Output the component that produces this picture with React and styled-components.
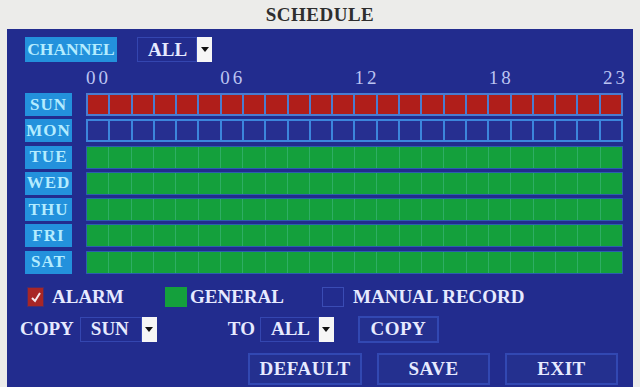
import React from 'react';
import styled, {createGlobalStyle} from 'styled-components';

const GlobalStyle = createGlobalStyle`
html, body {
    margin: 0;
    padding: 0;
    background: #ececea;
}
`;

const Page = styled.div`
width: 640px;
height: 387px;
overflow: hidden;
background: #ececea;
display: flex;
flex-direction: column;
font-family: "Liberation Serif", "Times New Roman", serif;
font-weight: bold;
font-size: 19px;
`;

const TitleBar = styled.div`
height: 29px;
line-height: 30px;
text-align: center;
color: #2e2e2e;
letter-spacing: 0.5px;
flex-shrink: 0;
`;

const Panel = styled.div`
flex: 1;
margin: 0 7px;
background: #222c8e;
padding: 8px 0 0 18px;
display: flex;
flex-direction: column;
color: #e6eaff;
`;

const Row = styled.div`
display: flex;
align-items: center;
height: ${p => p.h}px;
margin-top: ${p => p.mt || 0}px;
margin-left: ${p => p.ml || 0}px;
`;

const Tag = styled.div`
width: ${p => p.w}px;
height: ${p => p.h}px;
background: #2391dc;
color: #b4ecff;
font-size: ${p => p.fs || 19}px;
letter-spacing: ${p => p.ls || 0}px;
display: flex;
align-items: center;
justify-content: center;
flex-shrink: 0;
`;

const SelectBox = styled.div`
display: flex;
align-items: stretch;
height: 25px;
margin-left: ${p => p.ml || 0}px;
`;

const SelectValue = styled.div`
width: ${p => p.w}px;
border: 1px solid #3446b0;
box-sizing: border-box;
display: flex;
align-items: center;
padding-left: 10px;
`;

const Arrow = styled.div`
width: 15px;
background: #f6f6f6;
display: flex;
align-items: center;
justify-content: center;
&::after {
    content: '';
    border-left: 4px solid transparent;
    border-right: 4px solid transparent;
    border-top: 5px solid #111;
}
`;

const Hours = styled.div`
display: grid;
grid-template-columns: repeat(24, 1fr);
width: 537px;
margin-left: 61px;
height: 31px;
align-items: center;
font-weight: normal;
font-size: 19px;
letter-spacing: 3px;
color: #bcc4f2;
`;

const Hour = styled.span`
grid-column: ${p => p.col + 1} / span 3;
text-align: ${p => p.right ? 'right' : 'left'};
margin-right: ${p => p.right ? -5 : 0}px;
`;

const Days = styled.div`
display: flex;
flex-direction: column;
gap: 3.3px;
`;

const DayRow = styled.div`
display: flex;
align-items: stretch;
height: 23px;
`;

const Cells = styled.div`
margin-left: 14px;
width: 537px;
box-sizing: border-box;
display: grid;
grid-template-columns: repeat(24, 1fr);
gap: ${p => p.kind === 'green' ? 1 : 2}px;
padding: ${p => p.kind === 'green' ? 0 : 2}px;
background: ${p => p.kind === 'red' ? '#4a7cd0' : p.kind === 'blue' ? '#3c86dc' : '#2eae64'};
border: ${p => p.kind === 'green' ? '1px solid #2b5fae' : 'none'};
`;

const Cell = styled.div`
background: ${p => p.kind === 'red' ? '#b01e1a' : p.kind === 'blue' ? '#262f90' : '#14a03c'};
`;

const Legend = styled.div`
display: flex;
align-items: center;
height: 20px;
margin-top: 13px;
margin-left: 2px;
`;

const LegendItem = styled.div`
display: flex;
align-items: center;
width: ${p => p.w ? p.w + 'px' : 'auto'};
`;

const Swatch = styled.div`
width: ${p => p.w}px;
height: 20px;
box-sizing: border-box;
margin-right: ${p => p.mr}px;
background: ${p => p.bg};
border: 1px solid ${p => p.bd};
display: flex;
align-items: center;
justify-content: center;
`;

const Label = styled.span`
margin-left: ${p => p.ml || 0}px;
white-space: pre;
`;

const Btn = styled.div`
width: ${p => p.w}px;
height: ${p => p.h}px;
margin-left: ${p => p.ml || 0}px;
box-sizing: border-box;
border: 2px solid #3248b2;
background: #24308f;
letter-spacing: 0.5px;
display: flex;
align-items: center;
justify-content: center;
`;

const days = [
    {name: 'SUN', kind: 'red'},
    {name: 'MON', kind: 'blue'},
    {name: 'TUE', kind: 'green'},
    {name: 'WED', kind: 'green'},
    {name: 'THU', kind: 'green'},
    {name: 'FRI', kind: 'green'},
    {name: 'SAT', kind: 'green'},
];

const hours = [0, 6, 12, 18, 23];

const Select = ({value, w, ml}) => (
    <SelectBox ml={ml}>
        <SelectValue w={w}>{value}</SelectValue>
        <Arrow />
    </SelectBox>
);

const App = () => {
    return (
        <Page>
            <GlobalStyle />
            <TitleBar>SCHEDULE</TitleBar>
            <Panel>
                <Row h={25}>
                    <Tag w={92} h={25} fs={17.5}>CHANNEL</Tag>
                    <Select value='ALL' w={60} ml={20} />
                </Row>

                <Hours>
                    {hours.map(h => (
                        <Hour key={h} col={h === 23 ? 21 : h} right={h === 23}>
                            {String(h).padStart(2, '0')}
                        </Hour>
                    ))}
                </Hours>

                <Days>
                    {days.map(d => (
                        <DayRow key={d.name}>
                            <Tag w={47} h={23} fs={17} ls={1}>{d.name}</Tag>
                            <Cells kind={d.kind}>
                                {Array.from({length: 24}).map((_, i) => <Cell key={i} kind={d.kind} />)}
                            </Cells>
                        </DayRow>
                    ))}
                </Days>

                <Legend>
                    <LegendItem w={138}>
                        <Swatch w={17} mr={0} bg='#a82626' bd='#4c2c6a'>
                            <svg width='12' height='12' viewBox='0 0 12 12'>
                                <path d='M2 7 L5 10 L10 2' stroke='#f4e8ee' strokeWidth='2' fill='none' />
                            </svg>
                        </Swatch>
                        <Label ml={8}>ALARM</Label>
                    </LegendItem>
                    <LegendItem w={157}>
                        <Swatch w={22} mr={3} bg='#14a03c' bd='#14a03c' />
                        <Label>GENERAL</Label>
                    </LegendItem>
                    <LegendItem>
                        <Swatch w={22} mr={9} bg='#222c8e' bd='#3a4cb4' />
                        <Label>MANUAL RECORD</Label>
                    </LegendItem>
                </Legend>

                <Row h={25} mt={10} ml={-5}>
                    <Label>COPY</Label>
                    <Select value='SUN' w={62} ml={6} />
                    <Label ml={71}>TO</Label>
                    <Select value='ALL' w={59} ml={5} />
                    <Btn w={81} h={27} ml={24}>COPY</Btn>
                </Row>

                <Row h={32} mt={11} ml={223}>
                    <Btn w={114} h={32}>DEFAULT</Btn>
                    <Btn w={113} h={32} ml={15}>SAVE</Btn>
                    <Btn w={113} h={32} ml={15}>EXIT</Btn>
                </Row>
            </Panel>
        </Page>
    );
};

export default App;
